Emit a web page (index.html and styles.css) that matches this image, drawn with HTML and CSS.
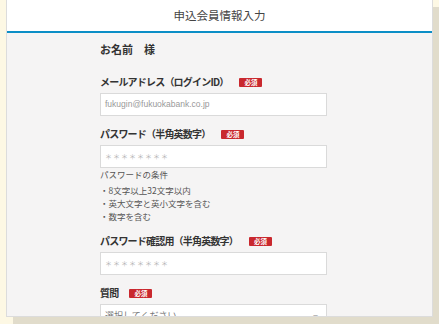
FILE: index.html
```html
<!DOCTYPE html>
<html lang="ja">
<head>
  <meta charset="UTF-8">
  <title>申込会員情報入力</title>
  <link rel="stylesheet" href="styles.css">
</head>
<body>

  <div class="screen">
    <div class="header">申込会員情報入力</div>

    <div class="form">
      <p class="name">お名前　様</p>

      <div class="field">
        <div class="label"><span class="text">メールアドレス（ログインID）</span><span class="req">必須</span></div>
        <div class="input placeholder">fukugin@fukuokabank.co.jp</div>
      </div>

      <div class="field">
        <div class="label"><span class="text">パスワード（半角英数字）</span><span class="req">必須</span></div>
        <div class="input dots">＊＊＊＊＊＊＊＊</div>
        <ul class="rules">
          <li class="title">パスワードの条件</li>
          <li>・8文字以上32文字以内</li>
          <li>・英大文字と英小文字を含む</li>
          <li>・数字を含む</li>
        </ul>
      </div>

      <div class="field">
        <div class="label"><span class="text">パスワード確認用（半角英数字）</span><span class="req">必須</span></div>
        <div class="input dots">＊＊＊＊＊＊＊＊</div>
      </div>

      <div class="field">
        <div class="label"><span class="text">質問</span><span class="req">必須</span></div>
        <div class="input select">選択してください<span class="caret">−</span></div>
      </div>
    </div>
  </div>

</body>
</html>
```

FILE: styles.css
```css
body {
  margin: 0;
  background: #fdf8e4;
  font-family: "Noto Sans CJK JP", "Noto Sans", sans-serif;
  color: #333;
  width: 439px;
  height: 324px;
  overflow: hidden;
}

.screen {
  margin-left: 6px;
  width: 425px;
  height: 316px;
  background: #f5f4f4;
  border: 1px solid #dcdcdc;
  border-top: none;
  box-shadow: 7px 7px 0 #e1dccb;
  overflow: hidden;
}

.header {
  height: 31px;
  line-height: 30px;
  background: #fff;
  text-align: center;
  font-size: 11.5px;
  color: #444;
  border-bottom: 2px solid #0b8ec6;
}

.form {
  padding: 8px 0 0 93px;
  width: 227px;
}

.name {
  margin: 0 0 18px;
  font-size: 11px;
  font-weight: bold;
  line-height: 16px;
}

.field {
  margin-bottom: 11px;
}

.label {
  font-size: 10px;
  font-weight: bold;
  line-height: 14px;
  margin-bottom: 4px;
  display: flex;
  align-items: center;
  gap: 11px;
}

.label .text {
  letter-spacing: -0.8px;
}

.req {
  display: block;
  background: #c9282e;
  color: #fff;
  font-size: 6.5px;
  line-height: 9px;
  padding: 0 5px;
  border-radius: 1px;
}

.input {
  height: 21px;
  line-height: 21px;
  background: #fff;
  border: 1px solid #dadada;
  padding: 0 4px;
  font-size: 9px;
  color: #aaa;
}

.placeholder {
  font-family: "Liberation Sans", sans-serif;
  font-size: 8.5px;
  color: #999;
}

.dots {
  font-size: 7px;
  letter-spacing: 1px;
  color: #b5b5b5;
}

.select {
  display: flex;
  justify-content: space-between;
  color: #777;
}

.caret {
  color: #999;
  margin-right: 4px;
}

.rules {
  list-style: none;
  margin: 0 0 8px;
  padding: 0;
  font-size: 8.5px;
  line-height: 13px;
  color: #555;
}

.rules .title {
  margin-bottom: 3px;
}
```
